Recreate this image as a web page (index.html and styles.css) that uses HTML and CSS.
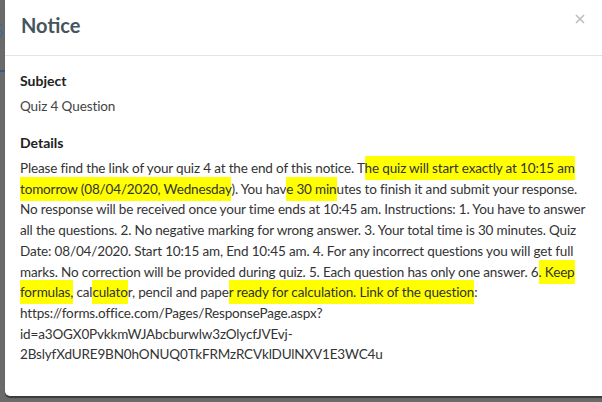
FILE: index.html
```html
<!DOCTYPE html>
<html>
<head>
<meta charset="utf-8">
<link rel="stylesheet" href="styles.css">
</head>
<body>
<div class="page">
  <div class="backdrop">
    <span class="bd-text">S</span>
    <span class="bd-line"></span>
  </div>
  <div class="dialog">
    <div class="dialog-header">
      <h1 class="title">Notice</h1>
      <svg class="close" width="10" height="10" viewBox="0 0 10 10"><path d="M1 1L9 9M9 1L1 9" stroke="#bdbdbd" stroke-width="1.6" fill="none"/></svg>
    </div>
    <div class="dialog-body">
      <h2 class="label">Subject</h2>
      <p class="value">Quiz 4 Question</p>
      <h2 class="label details-label">Details</h2>
      <p class="details">Please find the link of your quiz 4 at the end of this notice. T<span class="hl">he quiz will start exactly at 10:15 am tomorrow (08/04/2020, Wednesday</span>). You hav<span class="hl">e 30 min</span>utes to finish it and submit your response. No response will be received once your time ends at 10:45 am. Instructions: 1. You have to answer all the questions. 2. No negative marking for wrong answer. 3. Your total time is 30 minutes. Quiz Date: 08/04/2020. Start 10:15 am, End 10:45 am. 4. For any incorrect questions you will get full marks. No correction will be provided during quiz. 5. Each question has only one answer. 6<span class="hl">. Keep formulas,</span> cal<span class="hl">culato</span>r, pencil and pape<span class="hl">r ready for calculation. Link of the question</span>: https://forms.office.com/Pages/ResponsePage.aspx?<wbr>id=a3OGX0PvkkmWJAbcburwlw3zOlycfJVEvj-<wbr>2BslyfXdURE9BN0hONUQ0TkFRMzRCVklDUlNXV1E3WC4u</p>
    </div>
  </div>
</div>
</body>
</html>
```

FILE: styles.css
```css
html, body {
  margin: 0;
  padding: 0;
}
body {
  width: 602px;
  height: 402px;
  overflow: hidden;
  background: #6a6a6a;
  font-family: "Lato", "Liberation Sans", sans-serif;
}
.page {
  display: flex;
  height: 402px;
}
.backdrop {
  width: 5px;
  flex: 0 0 5px;
  position: relative;
  overflow: hidden;
}
.bd-text {
  position: absolute;
  left: -6px;
  top: 20px;
  font-size: 17px;
  color: #3f6a96;
}
.bd-line {
  position: absolute;
  left: 0;
  top: 70px;
  width: 5px;
  height: 2px;
  background: #2d5a8a;
}
.dialog {
  flex: 0 0 605px;
  height: 396px;
  background: #fff;
  border-radius: 0 0 0 5px;
  box-shadow: 0 2px 1px rgba(0,0,0,0.45);
  display: flex;
  flex-direction: column;
}
.dialog-header {
  height: 56px;
  border-bottom: 1px solid #e3e3e3;
  display: flex;
  align-items: center;
  justify-content: space-between;
  padding: 0 25px 6px 16px;
  box-sizing: border-box;
}
.title {
  margin: 0;
  font-size: 20px;
  font-weight: 700;
  color: #45545d;
}
.close {
  display: block;
  margin-top: -11px;
}
.dialog-body {
  padding: 15px 22px 0 15px;
  color: #333;
}
.label {
  margin: 0;
  font-size: 14px;
  font-weight: 700;
  color: #222;
  line-height: 20px;
}
.value {
  margin: 5px 0 0;
  font-size: 13.5px;
  letter-spacing: -0.1px;
  line-height: 20px;
  color: #444;
}
.details-label {
  margin-top: 17px;
}
.details {
  margin: 5px 0 0;
  font-size: 13.5px;
  letter-spacing: -0.15px;
  line-height: 20.7px;
  color: #333;
}
.hl {
  background: #ffff00;
  padding: 4px 0;
}
```
